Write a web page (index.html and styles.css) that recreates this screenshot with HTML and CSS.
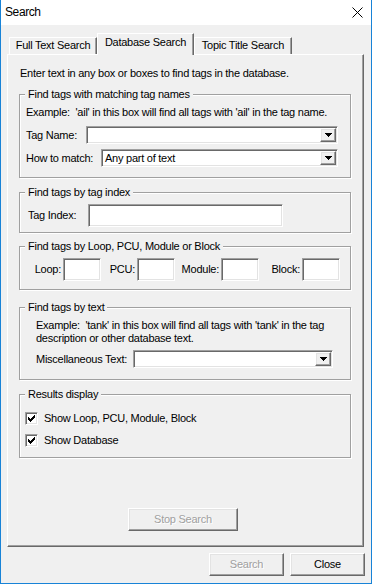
FILE: index.html
```html
<!DOCTYPE html>
<html>
<head>
<meta charset="utf-8">
<title>Search</title>
<link rel="stylesheet" href="styles.css">
</head>
<body>
<div class="window">
  <div class="titlebar">
    <span class="title">Search</span>
    <svg class="close-x" width="11" height="11" viewBox="0 0 11 11"><path d="M0.5 0.5 L10.5 10.5 M10.5 0.5 L0.5 10.5" stroke="#000" stroke-width="1" fill="none"/></svg>
  </div>
  <div class="client">
    <div class="tabs">
      <div class="tab t1">Full Text Search</div>
      <div class="tab active t2">Database Search</div>
      <div class="tab t3">Topic Title Search</div>
    </div>
    <div class="panel">
      <p class="intro">Enter text in any box or boxes to find tags in the database.</p>

      <fieldset class="group g1">
        <legend>Find tags with matching tag names</legend>
        <p class="note">Example:&nbsp; 'ail' in this box will find all tags with 'ail' in the tag name.</p>
        <div class="row row-tag">
          <span class="lbl">Tag Name:</span>
          <div class="combo sunken w-tag"><span class="combo-text"></span><span class="drop raised"><svg width="7" height="4" viewBox="0 0 7 4"><path d="M0 0h7v1h-7z M1 1h5v1h-5z M2 2h3v1h-3z M3 3h1v1h-1z" fill="#000" shape-rendering="crispEdges"/></svg></span></div>
        </div>
        <div class="row row-how">
          <span class="lbl">How to match:</span>
          <div class="combo sunken w-how"><span class="combo-text">Any part of text</span><span class="drop raised"><svg width="7" height="4" viewBox="0 0 7 4"><path d="M0 0h7v1h-7z M1 1h5v1h-5z M2 2h3v1h-3z M3 3h1v1h-1z" fill="#000" shape-rendering="crispEdges"/></svg></span></div>
        </div>
      </fieldset>

      <fieldset class="group g2">
        <legend>Find tags by tag index</legend>
        <div class="row row-index">
          <span class="lbl">Tag Index:</span>
          <div class="edit sunken w-index"></div>
        </div>
      </fieldset>

      <fieldset class="group g3">
        <legend>Find tags by Loop, PCU, Module or Block</legend>
        <div class="lpmb">
          <span class="lbl-r">Loop:</span><div class="edit sunken"></div>
          <span class="lbl-r">PCU:</span><div class="edit sunken"></div>
          <span class="lbl-r">Module:</span><div class="edit sunken"></div>
          <span class="lbl-r">Block:</span><div class="edit sunken"></div>
        </div>
      </fieldset>

      <fieldset class="group g4">
        <legend>Find tags by text</legend>
        <p class="note note-wide">Example:&nbsp; 'tank' in this box will find all tags with 'tank' in the tag<br>description or other database text.</p>
        <div class="row row-misc">
          <span class="lbl">Miscellaneous Text:</span>
          <div class="combo sunken w-misc"><span class="combo-text"></span><span class="drop raised"><svg width="7" height="4" viewBox="0 0 7 4"><path d="M0 0h7v1h-7z M1 1h5v1h-5z M2 2h3v1h-3z M3 3h1v1h-1z" fill="#000" shape-rendering="crispEdges"/></svg></span></div>
        </div>
      </fieldset>

      <fieldset class="group g5">
        <legend>Results display</legend>
        <div class="check-row cr1">
          <span class="checkbox sunken"><svg width="7" height="7" viewBox="0 0 7 7"><path d="M6 0h1v1h-1z M5 1h2v1h-2z M0 2h1v1h-1z M4 2h3v1h-3z M0 3h2v1h-2z M3 3h3v1h-3z M0 4h5v1h-5z M1 5h3v1h-3z M2 6h1v1h-1z" fill="#000" shape-rendering="crispEdges"/></svg></span>
          <span class="check-label">Show Loop, PCU, Module, Block</span>
        </div>
        <div class="check-row cr2">
          <span class="checkbox sunken"><svg width="7" height="7" viewBox="0 0 7 7"><path d="M6 0h1v1h-1z M5 1h2v1h-2z M0 2h1v1h-1z M4 2h3v1h-3z M0 3h2v1h-2z M3 3h3v1h-3z M0 4h5v1h-5z M1 5h3v1h-3z M2 6h1v1h-1z" fill="#000" shape-rendering="crispEdges"/></svg></span>
          <span class="check-label">Show Database</span>
        </div>
      </fieldset>

      <button class="btn raised disabled stop">Stop Search</button>
    </div>
    <div class="footer">
      <button class="btn raised disabled w75">Search</button>
      <button class="btn raised w75">Close</button>
    </div>
  </div>
</div>
</body>
</html>
```

FILE: styles.css
```css
* { box-sizing: border-box; }

body {
  margin: 0;
  font-family: "Liberation Sans", Arial, sans-serif;
  font-size: 11px;
  line-height: 13px;
  letter-spacing: -0.25px;
  color: #000;
  background: #f0f0f0;
}

.window {
  width: 372px;
  height: 584px;
  border: 1px solid #1883d7;
  border-top: 0;
  background: #f0f0f0;
  display: flex;
  flex-direction: column;
}

.titlebar {
  height: 25px;
  flex: none;
  background: #fff;
  display: flex;
  align-items: center;
  justify-content: space-between;
  padding: 0 8px 0 4px;
}

.title {
  font-size: 12px;
  letter-spacing: -0.4px;
}

.close-x { display: block; }

.client {
  flex: 1;
  padding: 8px 0 0 6px;
}

/* classic 3D borders */
.sunken {
  background: #fff;
  border: 1px solid;
  border-color: #a0a0a0 #fff #fff #a0a0a0;
  box-shadow: inset 1px 1px 0 #696969, inset -1px -1px 0 #e3e3e3;
}

.raised {
  background: #f0f0f0;
  border: 1px solid;
  border-color: #fff #696969 #696969 #fff;
  box-shadow: inset -1px -1px 0 #a0a0a0, inset 1px 1px 0 #e3e3e3;
}

/* tabs */
.tabs {
  height: 21px;
  margin-left: 2px;
  display: flex;
  align-items: flex-end;
}

.tab {
  height: 17px;
  border: 1px solid;
  border-bottom: 0;
  border-color: #fff #696969 transparent #fff;
  box-shadow: inset -1px 0 0 #a0a0a0;
  background: #f0f0f0;
  text-align: center;
  padding-top: 1px;
  white-space: nowrap;
}

.t1 { width: 88px; }
.t2 { width: 97px; }
.t3 { width: 98px; }

.tab.active {
  height: 22px;
  margin-bottom: -1px;
  position: relative;
  z-index: 1;
  padding-top: 2px;
}

/* panel */
.panel {
  width: 357px;
  height: 493px;
  border: 1px solid;
  border-color: #fff #696969 #696969 #fff;
  box-shadow: inset -1px -1px 0 #a0a0a0;
  padding: 12px 0 0 0;
}

.intro {
  margin: 0 0 0 12px;
  white-space: nowrap;
}

/* group boxes */
.group {
  margin: 0 0 0 11px;
  width: 332px;
  min-width: 0;
  border: 1px solid #a0a0a0;
  box-shadow: 1px 1px 0 #fff, inset 1px 1px 0 #fff;
  padding: 5px 0 0 6px;
}

.group legend {
  margin-left: -1px;
  padding: 0 3px;
  background: #f0f0f0;
  line-height: 13px;
  white-space: nowrap;
}

.g1 { margin-top: 8px; padding-bottom: 10px; }
.g2 { margin-top: 8px; padding-bottom: 5px; }
.g3 { margin-top: 7px; padding-bottom: 8px; }
.g4 { margin-top: 11px; padding-bottom: 11px; }
.g5 { margin-top: 8px; padding-top: 11px; padding-bottom: 10px; }

.note {
  margin: 0;
  white-space: nowrap;
}

.note-wide { margin-left: 10px; }

.row {
  display: flex;
  align-items: center;
  white-space: nowrap;
}

.row-tag { margin-top: 7px; justify-content: space-between; width: 312px; }
.row-how { margin-top: 5px; justify-content: space-between; width: 312px; }
.row-index { margin-left: 2px; }
.row-misc { margin-top: 5px; margin-left: 10px; justify-content: space-between; width: 297px; }

.combo {
  height: 18px;
  display: flex;
  align-items: stretch;
  padding: 1px;
}

.combo-text {
  flex: 1;
  padding-left: 2px;
  line-height: 14px;
}

.drop {
  width: 16px;
  display: flex;
  align-items: center;
  justify-content: center;
}

.drop svg { display: block; }

.w-tag { width: 252px; }
.w-how { width: 237px; }
.w-misc { width: 200px; }

.edit { height: 23px; }

.w-index { width: 195px; margin-left: 12px; }

.lpmb {
  margin-left: -6px;
  display: grid;
  grid-template-columns: 43px 38px 36px 38px 46px 38px 43px 38px;
  align-items: center;
  white-space: nowrap;
}

.lbl-r {
  text-align: right;
  padding-right: 2px;
}

/* checkboxes */
.check-row {
  display: flex;
  align-items: center;
  height: 13px;
  margin-left: -1px;
}

.cr2 { margin-top: 9px; }

.checkbox {
  width: 13px;
  height: 13px;
  flex: none;
  display: flex;
  align-items: center;
  justify-content: center;
}

.checkbox svg { display: block; }

.check-label { margin-left: 6px; white-space: nowrap; }

/* buttons */
.btn {
  font: inherit;
  letter-spacing: inherit;
  color: #000;
  height: 23px;
  padding: 0;
  margin: 0;
  display: block;
}

.btn.disabled {
  color: #a0a0a0;
  text-shadow: 1px 1px 0 #fff;
}

.stop {
  width: 110px;
  margin: 50px 0 0 120px;
}

.footer {
  display: flex;
  justify-content: flex-end;
  gap: 6px;
  margin-top: 6px;
  padding-right: 6px;
}

.w75 { width: 75px; }
```
